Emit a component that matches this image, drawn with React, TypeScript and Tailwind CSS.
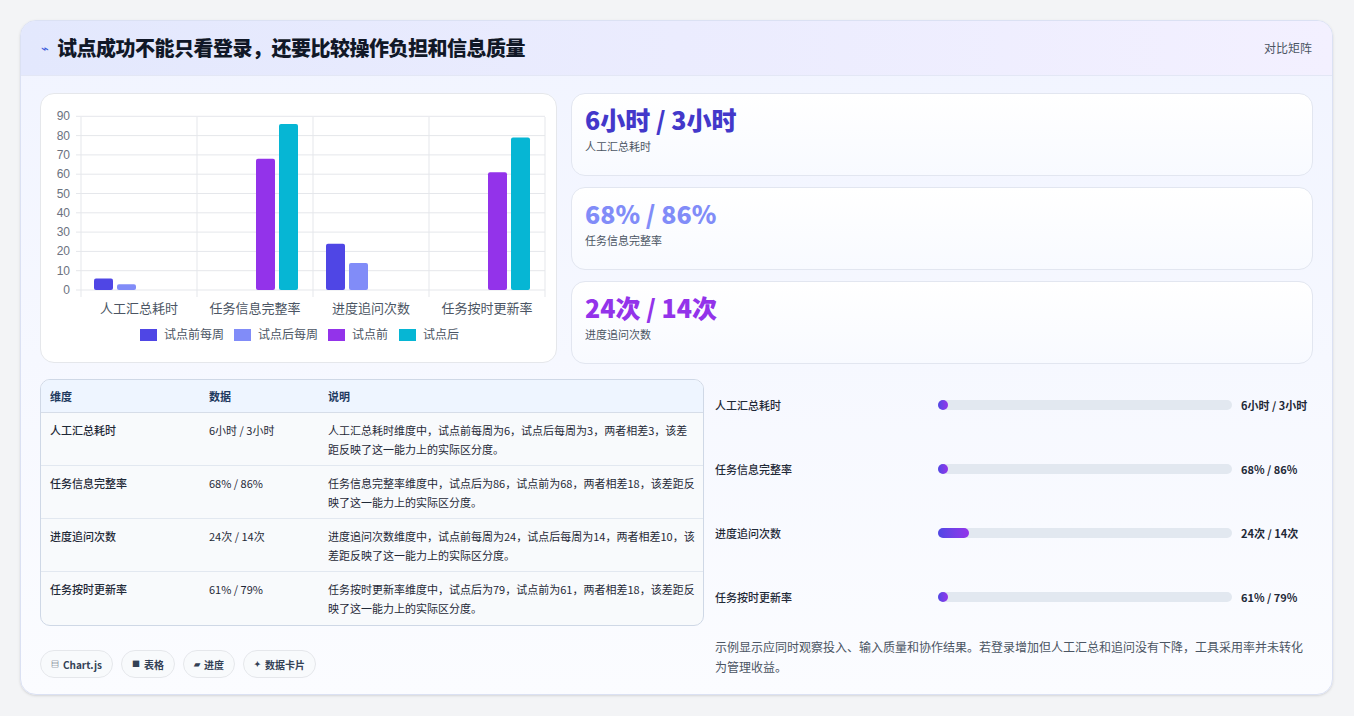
import React from "react";

const cats = ["人工汇总耗时", "任务信息完整率", "进度追问次数", "任务按时更新率"];
const data = [
  [6, 3, 0, 0],
  [0, 0, 68, 86],
  [24, 14, 0, 0],
  [0, 0, 61, 79],
];
const colors = ["#4f46e5", "#818cf8", "#9333ea", "#06b6d4"];

function Chart() {
  const y0 = 289, per = 1.93;
  return (
    <svg viewBox="40 93 516 269" width="516" height="269" className="absolute inset-0">
      {[0, 10, 20, 30, 40, 50, 60, 70, 80, 90].map((v) => (
        <g key={v}>
          <line x1={75} x2={544} y1={y0 - v * per} y2={y0 - v * per} stroke="#e5e7eb" strokeWidth="1" />
          <text x={69} y={y0 - v * per + 4} fontSize="12" textAnchor="end" fill="#6b7280" fontFamily="Liberation Sans, sans-serif">{v}</text>
        </g>
      ))}
      {[80, 196, 312, 428, 544].map((x) => (
        <line key={x} x1={x} x2={x} y1={116} y2={296} stroke="#e5e7eb" />
      ))}
      {data.map((row, ci) =>
        row.map((v, bi) =>
          v > 0 ? (
            <rect key={ci + "-" + bi} x={80 + ci * 116 + 13 + bi * 23} y={y0 - v * per} width={19} height={v * per} rx={2} fill={colors[bi]} />
          ) : null
        )
      )}
      {cats.map((c, i) => (
        <text key={c} x={138 + i * 116} y={312} fontSize="13" textAnchor="middle" fill="#4b5563" fontFamily="Noto Sans CJK SC, sans-serif">{c}</text>
      ))}
      {[["试点前每周", 139], ["试点后每周", 233], ["试点前", 327], ["试点后", 398]].map(([t, x], i) => (
        <g key={t as string}>
          <rect x={x as number} y={328} width={17} height={12} fill={colors[i]} />
          <text x={(x as number) + 24} y={338} fontSize="12" fill="#4b5563" fontFamily="Noto Sans CJK SC, sans-serif">{t}</text>
        </g>
      ))}
    </svg>
  );
}

const rows = [
  ["人工汇总耗时", "6小时 / 3小时", "人工汇总耗时维度中，试点前每周为6，试点后每周为3，两者相差3，该差距反映了这一能力上的实际区分度。", 3],
  ["任务信息完整率", "68% / 86%", "任务信息完整率维度中，试点后为86，试点前为68，两者相差18，该差距反映了这一能力上的实际区分度。", 1],
  ["进度追问次数", "24次 / 14次", "进度追问次数维度中，试点前每周为24，试点后每周为14，两者相差10，该差距反映了这一能力上的实际区分度。", 10],
  ["任务按时更新率", "61% / 79%", "任务按时更新率维度中，试点后为79，试点前为61，两者相差18，该差距反映了这一能力上的实际区分度。", 1],
] as const;

export default function App() {
  return (
    <div className="w-[1354px] h-[716px] bg-[#f3f4f6] pt-[20px] pl-[20px]" style={{ fontFamily: '"Noto Sans CJK SC", "Noto Sans", sans-serif' }}>
      <div className="w-[1313px] h-[675px] rounded-[16px] border border-[#dbe1f3] bg-gradient-to-b from-[#f1f4ff] to-[#fbfcff] overflow-hidden shadow-sm">
        <div className="h-[55px] bg-gradient-to-r from-[#e3e8fd] to-[#f3f0ff] border-b border-[#e3e7f5] flex items-center justify-between px-[20px]">
          <div className="flex items-center gap-[8px]">
            <span className="text-[#3b5bdb] text-[13px]">⌁</span>
            <span className="text-[20px] font-black text-[#111827] tracking-[-0.5px]">试点成功不能只看登录，还要比较操作负担和信息质量</span>
          </div>
          <span className="text-[12px] text-[#4b5563]">对比矩阵</span>
        </div>
        <div className="px-[19px] pt-[17px]">
          <div className="flex gap-[14px]">
            <div className="relative w-[517px] h-[270px] bg-white rounded-[14px] border border-[#e5e7eb]">
              <Chart />
            </div>
            <div className="flex-1 flex flex-col gap-[11px]">
              {[["6小时 / 3小时", "人工汇总耗时", "text-[#4338ca]"], ["68% / 86%", "任务信息完整率", "text-[#818cf8]"], ["24次 / 14次", "进度追问次数", "text-[#9333ea]"]].map(([v, l, c]) => (
                <div key={l} className="h-[83px] bg-gradient-to-b from-white to-[#f8faff] rounded-[14px] border border-[#e2e6f0] px-[13px] pt-[8px]">
                  <div className={"text-[25px] font-black leading-[34px] " + c}>{v}</div>
                  <div className="text-[11px] text-[#4b5563] mt-[2px]">{l}</div>
                </div>
              ))}
            </div>
          </div>
          <div className="flex gap-[11px] mt-[15px]">
            <div className="w-[664px]">
              <div className="rounded-[10px] border border-[#cfd8e6] overflow-hidden bg-[#f8fafc]">
                <div className="h-[33px] bg-[#eef5ff] flex items-center text-[11px] font-bold text-[#1e3a5f] border-b border-[#d6dde8]">
                  <div className="w-[168px] pl-[9px]">维度</div>
                  <div className="w-[119px]">数据</div>
                  <div>说明</div>
                </div>
                {rows.map((r, i) => (
                  <div key={r[0]} className={"h-[53px] flex items-start pt-[8px] text-[11px] text-[#1f2937] leading-[19px] " + (i < 3 ? "border-b border-[#e2e8f0]" : "")}>
                    <div className="w-[168px] pl-[9px] font-medium">{r[0]}</div>
                    <div className="w-[119px]">{r[1]}</div>
                    <div className="w-[368px]">{r[2]}</div>
                  </div>
                ))}
              </div>
              <div className="flex gap-[8px] mt-[24px]">
                {[["▤", "Chart.js"], ["■", "表格"], ["▰", "进度"], ["✦", "数据卡片"]].map(([ic, t]) => (
                  <div key={t} className="h-[28px] px-[10px] rounded-full border border-[#e5e7eb] bg-[#f8fafc] flex items-center gap-[4px] text-[10px] font-bold text-[#334155]">
                    <span className="text-[8px]">{ic}</span>{t}
                  </div>
                ))}
              </div>
            </div>
            <div className="flex-1 -mt-[6px]">
              {rows.map((r) => (
                <div key={r[0]} className="h-[64px] flex items-center text-[11px] font-medium text-[#1f2937]">
                  <div className="w-[223px]">{r[0]}</div>
                  <div className="flex-1 h-[10px] bg-[#e2e8f0] rounded-full mr-[9px]">
                    <div className="h-full rounded-full bg-gradient-to-r from-[#4f46e5] to-[#9333ea]" style={{ width: `max(10px, ${r[3] * 1.05}%)` }} />
                  </div>
                  <div className="w-[72px] whitespace-nowrap font-bold text-[11px]">{r[1]}</div>
                </div>
              ))}
              <div className="text-[12px] text-[#4b5563] leading-[20px] mt-[8px] pr-[2px]">示例显示应同时观察投入、输入质量和协作结果。若登录增加但人工汇总和追问没有下降，工具采用率并未转化为管理收益。</div>
            </div>
          </div>
        </div>
      </div>
    </div>
  );
}
